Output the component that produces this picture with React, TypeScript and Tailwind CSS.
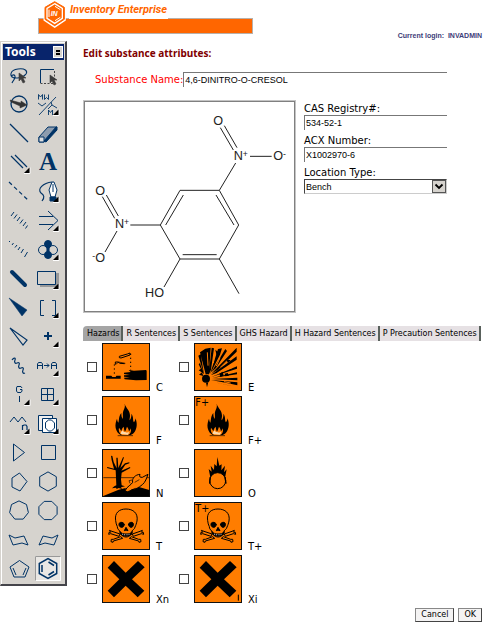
import React, { useState } from "react";

const navy = "#003366";
const verdana = "font-['DejaVu_Sans',Verdana,sans-serif]";
const arial = "font-['Liberation_Sans',Arial,sans-serif]";

/* ---------- tool palette ---------- */

const Cursor = ({ x, y }: { x: number; y: number }) => (
  <path
    d={`M${x} ${y}v8l2-2 2 4 2-1-2-4h3z`}
    fill="#3c3c3c"
    stroke="#3c3c3c"
    strokeWidth="0.6"
  />
);

const Corner = () => (
  <>
    <path d="M19 25.500h6v-6" stroke="#fff" fill="none" />
    <path d="M19 25h5.500v-5.500z" fill="#000" stroke="none" />
  </>
);

const ring = (n: number, r: number, rot: number) =>
  Array.from({ length: n }, (_, i) => {
    const a = ((rot + (360 / n) * i) * Math.PI) / 180;
    return `${(14 + r * Math.cos(a)).toFixed(1)},${(14.5 + r * Math.sin(a)).toFixed(1)}`;
  }).join(" ");

type Tool = { name: string; more?: boolean; art: React.ReactNode };

const tools: Tool[] = [
  {
    name: "Lasso",
    art: (
      <>
        <path d="M9 17c-5-2-4-8 4-9 7-1 10 2 8 5-3 4-11 5-14 3-1-2 2-3 3-1 1 3-2 4-3 7" strokeWidth="1.100" />
        <Cursor x={14} y={12} />
      </>
    ),
  },
  {
    name: "Marquee",
    art: (
      <>
        <path d="M6.500 22v-13.500h13.500" />
        <path d="M6.500 22.500h14v-14" strokeDasharray="2 1.500" stroke="#444" />
        <Cursor x={16} y={14} />
      </>
    ),
  },
  {
    name: "Rotate",
    art: (
      <>
        <circle cx="14" cy="14" r="8" strokeWidth="1.300" />
        <path d="M5 10l11 3v-2l6 4-7 3v-2L6 12z" fill="#333" stroke="#333" strokeWidth="0.500" />
      </>
    ),
  },
  {
    name: "Molecular weight",
    more: true,
    art: (
      <>
        <path d="M4.500 9.500V4.500l2 2.500 2-2.500v5M10.500 4.500v5l2-2 2 2V4.500" strokeWidth="0.900" />
        <path d="M5 25L22 7M4 13l4 3 4-3M17 12l1 3-4 4M18 15l5 3" strokeWidth="0.900" />
        <path d="M14.500 25v-5l2 2.500 2-2.500v5" strokeWidth="0.900" />
      </>
    ),
  },
  { name: "Solid bond", art: <path d="M5 5l18 18" strokeWidth="1.200" /> },
  {
    name: "Eraser",
    art: (
      <>
        <path d="M5 18L14 8h9l-9 12-4 3H5z" fill="#8d9cae" />
        <path d="M10 22L22 8h1v3L12 23z" fill={navy} />
        <path d="M5 18h5v5H5z" fill="#dedede" />
      </>
    ),
  },
  { name: "Double bond", more: true, art: <path d="M6 8l12 12M10 7l12 12" strokeWidth="1.200" /> },
  {
    name: "Text",
    art: (
      <text x="14" y="22" textAnchor="middle" fill={navy} stroke="none" fontSize="25" fontWeight="700" fontFamily="'Liberation Serif',serif">
        A
      </text>
    ),
  },
  { name: "Dashed bond", art: <path d="M4 5l19 18" strokeDasharray="4 3" strokeWidth="1.200" /> },
  {
    name: "Pen",
    more: true,
    art: (
      <>
        <path d="M8 24c3-4 2-6-1-8C3 12 9 6 18 5" strokeWidth="1.200" />
        <path d="M18 5l-3 8 2 7h4l2-7-3-8z" fill="#fff" />
        <path d="M19 7v8" />
        <path d="M16 20h6v4h-6z" fill={navy} />
      </>
    ),
  },
  {
    name: "Hashed bond",
    art: <path d="M6 10l3-4M9 12.500l3-4M12 15l3-4M15 17.500l3-4M18 20l3-4M20.500 22.500l2-3" />,
  },
  { name: "Arrow", more: true, art: <path d="M5 10.500h14M5 18.500h14M14 5l10 9.500-10 9.500" /> },
  {
    name: "Hashed wedge",
    art: <path d="M4 7l1-1M7 10l1.500-2M10 12.500l2-2.500M13 15l2-3M16 18l2.500-4M19.500 22l3-5" />,
  },
  {
    name: "Orbital",
    more: true,
    art: (
      <>
        <circle cx="9" cy="15" r="4.500" />
        <circle cx="19" cy="15" r="4.500" />
        <circle cx="14" cy="9" r="3.500" fill={navy} />
        <circle cx="14" cy="20" r="3.500" fill={navy} />
        <path d="M13 11h2v8h-2z" fill={navy} />
      </>
    ),
  },
  { name: "Bold bond", art: <path d="M7 8l13 13" strokeWidth="4" strokeLinecap="round" /> },
  {
    name: "Drawing element",
    more: true,
    art: (
      <>
        <path d="M6 9h19v14H6z" fill="#999" stroke="none" />
        <path d="M3.500 7.500h18v13h-18z" fill="#d6d3ce" />
      </>
    ),
  },
  { name: "Solid wedge", art: <path d="M4 5l18 12-5 6z" fill={navy} strokeWidth="0.500" /> },
  { name: "Brackets", more: true, art: <path d="M10 7.500H6.500v15H10M18 7.500h3.500v15H18" /> },
  { name: "Hollow wedge", art: <path d="M5 6l17 12-4 5z" strokeWidth="1.200" /> },
  { name: "Charge", more: true, art: <path d="M10 14h8M14 10v8" strokeWidth="2" /> },
  {
    name: "Wavy bond",
    art: <path d="M7 9c2-3 4-2 3 0s0 4 2 3 3 0 2 2 0 4 2 3 3 0 2 2 0 4 2 3" strokeWidth="1.200" />,
  },
  {
    name: "Atom mapping",
    more: true,
    art: (
      <path d="M3.500 18v-5l1-1.500h3l1 1.500v5M3.500 14.500h5M17.500 18v-5l1-1.500h3l1 1.500v5M17.500 14.500h5M10 14.500h5M13 12.500l2 2-2 2" />
    ),
  },
  {
    name: "Query atom",
    more: true,
    art: <path d="M17 8l-1-1.500h-4L11.500 8v3l1 1.500h3.500L17 11v-1.500H15M14.500 16v6" />,
  },
  { name: "Table", more: true, art: <path d="M7.500 8.500h12v12h-12zM13.500 8.500v12M7.500 14.500h12" /> },
  {
    name: "Chain",
    more: true,
    art: (
      <>
        <path d="M5 13l4-5 4 5 4-5 4 5" />
        <path d="M17.500 21v-5M17.500 17l1.500-1h2l1 1.500V21" strokeWidth="1.200" />
      </>
    ),
  },
  {
    name: "Templates",
    more: true,
    art: (
      <>
        <path d="M4.500 6.500h14v15h-14z" fill="#eee" />
        <path d="M8.500 9.500h14v14h-14z" fill="#fff" />
        <path d="M11.500 13.500l3-2.500h3l3 3v5l-3 3h-3l-3-3z" />
      </>
    ),
  },
  { name: "Cyclopropane", art: <path d="M8.500 6v17l11-8.500z" /> },
  { name: "Cyclobutane", art: <path d="M7.500 7.500h14v14h-14z" /> },
  { name: "Cyclopentane", art: <polygon points="7,11 14.500,6 22,14.500 15,24 7,20" /> },
  { name: "Cyclohexane", art: <polygon points={ring(6, 9.6, 30)} /> },
  { name: "Cycloheptane", art: <polygon points={ring(7, 9.6, -90)} /> },
  { name: "Cyclooctane", art: <polygon points={ring(8, 9.8, 22.5)} /> },
  { name: "Chair", art: <path d="M4 10l6 3 9-2 4 9-6-2-9 2z" /> },
  { name: "Reverse chair", art: <path d="M24 10l-6 3-9-2-4 9 6-2 9 2z" /> },
  {
    name: "Cyclopentadiene",
    art: (
      <>
        <path d="M5 13l9.500-6.500L24 13l-4 10h-11z" />
        <path d="M8 14l3 7M21 14l-3 7" />
      </>
    ),
  },
  {
    name: "Benzene",
    art: (
      <>
        <polygon points={ring(6, 10, 30)} strokeWidth="1.500" />
        <path d="M8 11v7M14.500 8l5.500 3.500M14.500 21l5.500-3.500" strokeWidth="1.500" />
      </>
    ),
  },
];

function ToolPalette() {
  const [active, setActive] = useState("Benzene");
  return (
    <aside className="w-[67px] shrink-0 self-start border border-r-2 border-b-2 border-[#d6d3ce] border-r-[#44444a] border-b-[#44444a] bg-[#d6d3ce]">
      <div className="border-t border-l border-white p-px">
        <div className="flex h-4 items-center justify-between bg-[#08246b] pr-px pl-0.5">
          <h2 className="font-['Noto_Sans',Tahoma,sans-serif] text-[12px] leading-4 font-bold text-white">Tools</h2>
          <button
            type="button"
            aria-label="Palette menu"
            className="flex h-3 w-[10px] flex-col items-center justify-center gap-px border border-white bg-[#d6d3ce]"
          >
            <span className="h-0.5 w-1 bg-black" />
            <span className="h-0.5 w-1 bg-black" />
          </button>
        </div>
        <div className="grid grid-cols-[29px_29px] justify-center pt-px">
          {tools.map((t) => (
            <button
              key={t.name}
              type="button"
              aria-label={t.name}
              aria-pressed={active === t.name}
              onClick={() => setActive(t.name)}
              className="flex size-[29px] items-center justify-center"
            >
              <svg width="29" height="29" viewBox="0 0 29 29" fill="none" stroke={navy}>
                {active === t.name && (
                  <>
                    <path d="M1.500 2.500h25v24h-25z" fill="#e9e7e4" stroke="#fff" />
                    <path d="M1.500 26.500v-24h25" stroke="#999" />
                  </>
                )}
                {t.art}
                {t.more && <Corner />}
              </svg>
            </button>
          ))}
        </div>
      </div>
    </aside>
  );
}

/* ---------- structure drawing ---------- */

function Structure() {
  return (
    <div className="w-[213px] shrink-0 border border-[#c4c4c4]">
      <div className="border border-[#808080] bg-white">
        <svg className="block w-full" viewBox="15 21 627 627" fill="none" stroke="#222" strokeWidth="3" role="img" aria-label="4,6-dinitro-o-cresol">
          <path d="M300 286H418L476 390L418 492H300L241 390Z" />
          <path d="M310 300L257 390M408 300L462 390M308 479H410" />
          <path d="M418 286L467 204M421 98L460 165M433 92L471 158M510 184H575" />
          <path d="M241 390H151M67 305L104 370M79 300L115 363M111 408L75 471" />
          <path d="M300 492L252 576M418 492L477 596" />
          <g fill="#222" stroke="none" fontFamily="'Liberation Sans',Arial,sans-serif" fontSize="38">
            <text x="400" y="90">O</text>
            <text x="461" y="196">N</text>
            <text x="488" y="186" fontSize="26">+</text>
            <text x="580" y="196">O</text>
            <text x="609" y="186" fontSize="26">-</text>
            <text x="46" y="299">O</text>
            <text x="105" y="400">N</text>
            <text x="132" y="390" fontSize="26">+</text>
            <text x="37" y="493" fontSize="26">-</text>
            <text x="46" y="502">O</text>
            <text x="195" y="606">HO</text>
          </g>
        </svg>
      </div>
    </div>
  );
}

/* ---------- hazard pictograms ---------- */

const orange = "#ff7d00";

const Flame = () => (
  <>
    <path d="M68 23c4 14 16 20 16 36 0 6-2 10-1 14 4-6 6-12 5-20 8 10 3 18 8 26 4-5 4-8 4-12 7 14 5 32-3 42-4 5-9 8-15 9H58c-9-4-15-12-17-22-2-11 1-20 4-28 1 6 2 9 4 12 3-8 0-18 9-29 0 8 1 14 4 18 2-12-1-16 2-24 3-8 6-12 4-22z" />
    <path d="M60 117c-9-5-11-14-9-22 3 4 5 7 7 11 1-6 3-10 7-14 1 7 2 11 4 15 3-6 4-9 6-15 4 5 5 9 6 14 3-3 4-6 5-9 3 9 0 17-8 20z" fill={orange} />
    <path d="M56 114c0-5 3-8 6-11 2 5 5 6 8 4 2 4 6 3 10 0 1 4 0 7-3 9z" fill="#ffd9a8" />
    <path d="M47 119h46" stroke="#5a2c00" strokeWidth="3" />
  </>
);

const Skull = () => (
  <g stroke="#000" strokeWidth="3">
    <path
      d="M22 85l8 3 24 8-3 7-25-8-6 2 1-6 5 0zM121 85l-7 3-23 8 3 7 24-8 7 2-1-6-5 0zM27 119l1-7 6 0 22-8 6 5-28 8-1 4zM117 119l-1-7-6 0-22-8-6 5 28 8 1 4z"
      fill={orange}
    />
    <path d="M41 56c-4-23 10-35 31-35s37 12 33 36c-2 8-3 12-6 18-1 7-7 8-9 12-1 9-7 18-18 18s-17-10-19-18c-3-4-7-6-7-13-3-5-4-11-5-18z" fill={orange} />
    <path d="M52 63c5-4 11-2 15 3 0 6-4 11-9 10-6-1-9-7-6-13zM79 66c4-5 10-7 14-3 3 5 1 11-4 13-6 1-9-4-10-10z" fill="#000" />
    <path d="M72 76l-5 10 4-1 1 1 1-1 5 1z" fill="#000" />
    <path d="M54 89c5 5 10 7 18 7s15-2 19-7l-2 8c-8 7-26 7-33 0z" fill="#000" />
    <path d="M62 95v4M68 96v4M75 96v4M81 95v4" stroke="#fff" strokeWidth="2" />
  </g>
);

const Cross = () => <path d="M36 18L71 53L108 18L128 37L90 73L127 107L107 127L71 92L36 127L17 107L52 73L17 38Z" />;

const Grade = ({ children }: { children: string }) => (
  <text x="4" y="29" fontSize="29" fontFamily="'DejaVu Sans',Verdana,sans-serif">
    {children}
  </text>
);

const hazards: { code: string; art: React.ReactNode }[] = [
  {
    code: "C",
    art: (
      <>
        <path d="M12 98h16l3 4h10l2-4h13v9H12z" />
        <path d="M66 89l20-2-6-6 16 2 36-2 2 2v28l-32 1-34-3-2-5 18-1-18-2v-4l18-1-18-3z" />
        <path d="M52 40l24-7 8-3v6l-27 9-5-1zM40 57h8l6 4 14 1M40 57v7" fill="none" stroke="#000" strokeWidth="3" />
        <path d="M37 64v30M86 32v50" fill="none" stroke="#000" strokeWidth="3" strokeDasharray="4 8" />
        <path d="M40 65l10-8 20 4" fill="none" stroke="#000" strokeWidth="2" />
      </>
    ),
  },
  {
    code: "E",
    art: (
      <>
        <circle cx="36" cy="107" r="12" />
        <path d="M35 94L18 28L34 17L50 14L45 94ZM44 96L53 14L60 16L51 80ZM48 94L72 18L84 16L78 35ZM52 88L94 18L99 24L66 75ZM52 92L128 14V26L72 80ZM50 97L128 40V50L68 90ZM52 102L129 70V77ZM54 105L129 88V94ZM52 108L130 104V112ZM51 111L130 118V127L102 121ZM48 115L100 126L126 132ZM30 94L13 38L20 34ZM29 95L14 64L18 60ZM36 119L39 133L43 118Z" />
        <path d="M62 30L58 60M78 44L67 69M40 28l2 40M102 50L80 72M94 102l30-2M90 116l20 4M92 82l24-9" stroke={orange} strokeWidth="3" />
        <path d="M64 20l12 10-8 8zM96 49l14 3-8 8zM92 92l9-2 4 8-11 2zM24 76l-10 6 16 10zM24 88l-9 7 13 4zM76 92l10-6 3 12-10 4z" />
      </>
    ),
  },
  { code: "F", art: <Flame /> },
  {
    code: "F+",
    art: (
      <>
        <Flame />
        <Grade>F+</Grade>
      </>
    ),
  },
  {
    code: "N",
    art: (
      <>
        <path d="M4 86H142" stroke="#000" strokeWidth="2" />
        <path d="M41 64L15 57l1-3 20 5-7-25-2-14 4 1 4 18 9 19-1-32h4l2 31 14-32h3L55 57l14-14 13-3v3l-12 4-12 18 26-11 1 3-26 14-2 20 2 18 10 3-12 3 3 5-10-3-6 3-2-4-12 2 7-6 6-3z" />
        <path d="M2 142l48-20 18-4 24 3 16-8 34 10v19z" />
        <path d="M70 124c5-12 18-16 22-24-3-12 8-23 22-24-3 8 0 9 7 9l17-9c-4 11-8 24-17 31-11 9-20 14-31 15-6 3-12 8-18 5z" fill={orange} stroke="#000" strokeWidth="3" />
        <path d="M84 103l-3-8 9-2M84 126l16-8M98 100l14-8" stroke="#000" strokeWidth="2" fill="none" />
      </>
    ),
  },
  {
    code: "O",
    art: (
      <>
        <path d="M50 90l-6-30 9 8-3-18 10 13 1-18 7 7 2-28 6 26 7-4-1 18 11-14-3 20 8-9-6 31-4-5c-8-16-28-18-38-1z" />
        <circle cx="71" cy="95" r="24" fill={orange} stroke="#000" strokeWidth="3" />
        <path d="M49 84l-2 20M93 84l3 20" stroke="#000" strokeWidth="4" fill="none" />
      </>
    ),
  },
  { code: "T", art: <Skull /> },
  {
    code: "T+",
    art: (
      <>
        <Skull />
        <Grade>T+</Grade>
      </>
    ),
  },
  { code: "Xn", art: <Cross /> },
  {
    code: "Xi",
    art: (
      <>
        <Cross />
        <path d="M133 119v18" stroke="#000" strokeWidth="3" />
      </>
    ),
  },
];

function HazardGrid() {
  return (
    <div className="grid grid-cols-[92px_92px] gap-y-[5px] pt-0.5 pl-1">
      {hazards.map((h) => (
        <label key={h.code} className="flex items-center">
          <input type="checkbox" className="size-[10px] shrink-0 appearance-none border border-[#444] bg-white checked:bg-[#444]" />
          <svg className="ml-[5px] size-12 shrink-0" viewBox="0 0 144 144" aria-hidden="true">
            <rect x="1.500" y="1.500" width="141" height="141" fill={orange} stroke="#111" strokeWidth="3" />
            {h.art}
          </svg>
          <span className={`${verdana} -mb-[3px] ml-1.5 self-end text-[10px] leading-3`}>{h.code}</span>
        </label>
      ))}
    </div>
  );
}

/* ---------- form ---------- */

const fieldBox = `${arial} block h-[15px] w-full min-w-0 rounded-none border-0 border-t border-l border-[#777] bg-white px-px text-[9px] leading-[14px] text-black outline-none`;

function Field({ id, label, children }: { id: string; label: string; children: React.ReactNode }) {
  return (
    <div>
      <label htmlFor={id} className={`${verdana} block text-[10px] leading-3`}>
        {label}
      </label>
      {children}
    </div>
  );
}

const tabs = ["Hazards", "R Sentences", "S Sentences", "GHS Hazard", "H Hazard Sentences", "P Precaution Sentences"];

function Tabs() {
  const [active, setActive] = useState(tabs[0]);
  return (
    <div role="tablist" className="flex">
      {tabs.map((t) => (
        <button
          key={t}
          type="button"
          role="tab"
          aria-selected={active === t}
          onClick={() => setActive(t)}
          className={`${verdana} h-[15px] border-r-2 border-[#59615c] pr-0.5 pl-[3px] text-[8px] leading-[15px] whitespace-nowrap first:pl-1 ${
            active === t ? "rounded-tl-sm bg-[#a5a5a5]" : "bg-[#e6e1e4]"
          }`}
        >
          {t}
        </button>
      ))}
    </div>
  );
}

function Header() {
  return (
    <header className="relative h-[41px]">
      <div className="pt-[18px] pl-[38px]">
        <div className="h-4 w-[215px] border border-[#b8b0aa] bg-[#ff6600]" />
      </div>
      <div className="absolute top-0 left-[43px] flex">
        <svg width="24" height="28" viewBox="0 0 72 84" fill="#ff6600" stroke="#ff6600">
          <path d="M35 3L66 20V60L35 81L4 60V20Z" fill="#fff" stroke="#fff" strokeWidth="5" />
          <path d="M35 5L64 22V58L35 77L6 58V22Z" stroke="#ff6600" strokeWidth="3" />
          <path d="M35 11L58 25V55L35 70L12 55V25Z" fill="none" stroke="#fff" strokeWidth="4" />
          <path d="M36 19L52 29M36 62L52 52M18 29V51" fill="none" stroke="#fff" strokeWidth="3" />
          <text x="23" y="49" fontSize="21" fontWeight="700" fontStyle="italic" fill="#fff" stroke="none" fontFamily="'Liberation Sans',Arial,sans-serif">
            IN
          </text>
        </svg>
        <h1 className="ml-0.5 h-[19px] bg-white px-px font-['Roboto',sans-serif] text-[11px] leading-[19px] font-bold whitespace-nowrap text-[#ff6600] italic">
          Inventory Enterprise
        </h1>
      </div>
      <p className={`${arial} absolute top-[31px] right-0.5 text-[7px] leading-[10px] font-bold text-[#3c3c78]`}>
        Current login:&nbsp; INVADMIN
      </p>
    </header>
  );
}

export default function App() {
  return (
    <div className="bg-white text-black">
      <Header />
      <div className="flex">
        <ToolPalette />
        <main className="min-w-0 flex-1 pl-4">
          <h2 className="pt-1.5 font-['Noto_Sans',Tahoma,sans-serif] text-[10px] leading-3 font-bold text-[#800000]">
            Edit substance attributes:
          </h2>
          <div className="mt-[13px] flex items-center pr-[37px] pl-3">
            <label htmlFor="substance" className={`${verdana} text-[10px] leading-[15px] whitespace-nowrap text-[#ff0000]`}>
              Substance Name:
            </label>
            <input id="substance" defaultValue="4,6-DINITRO-O-CRESOL" className={fieldBox} />
          </div>
          <div className="mt-[13px] flex gap-2 pr-[37px]">
            <Structure />
            <div className="flex min-w-0 flex-1 flex-col gap-[5px] pt-[3px]">
              <Field id="cas" label="CAS Registry#:">
                <input id="cas" defaultValue="534-52-1" className={fieldBox} />
              </Field>
              <Field id="acx" label="ACX Number:">
                <input id="acx" defaultValue="X1002970-6" className={fieldBox} />
              </Field>
              <Field id="location" label="Location Type:">
                <div className="relative">
                  <select id="location" className={`${arial} block h-[15px] w-full appearance-none rounded-none border border-[#ccc] border-t-[#444] border-l-[#444] bg-white pl-px text-[9px] leading-3`}>
                    <option>Bench</option>
                  </select>
                  <svg className="pointer-events-none absolute top-px right-px" width="14" height="13" viewBox="0 0 14 13">
                    <rect x="0.500" y="0.500" width="13" height="12" fill="#d6d3ce" stroke="#555" />
                    <path d="M3.500 4.500L7 8L10.500 4.500" fill="none" stroke="#000" strokeWidth="1.800" />
                  </svg>
                </div>
              </Field>
            </div>
          </div>
          <div className="mt-[13px]">
            <Tabs />
            <HazardGrid />
          </div>
          <div className="flex justify-end gap-1 pt-[5px] pr-0.5">
            {["Cancel", "OK"].map((b) => (
              <button
                key={b}
                type="button"
                className={`${verdana} h-[14px] border border-[#888] border-r-[#444] border-b-[#444] bg-[#f4f3f3] px-[5px] text-[8px] leading-3`}
              >
                {b}
              </button>
            ))}
          </div>
        </main>
      </div>
    </div>
  );
}
